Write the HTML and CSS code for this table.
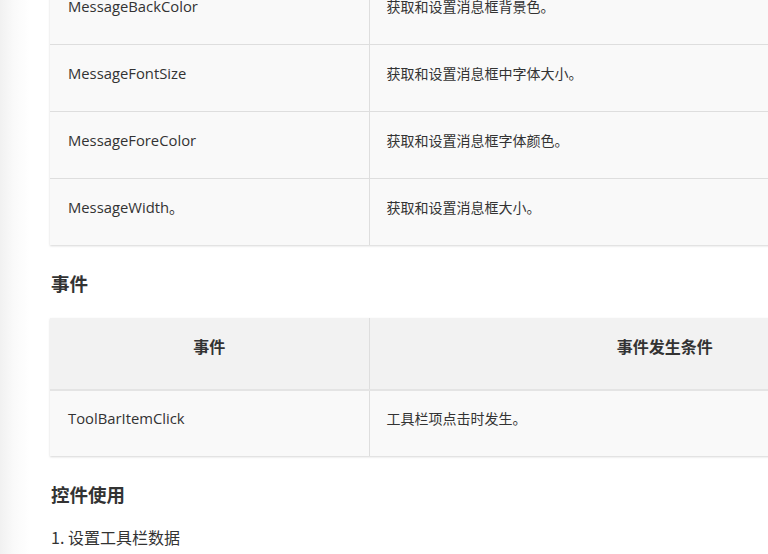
FILE: index.html
```html
<!DOCTYPE html>
<html lang="zh-CN">
<head>
<meta charset="utf-8">
<link rel="stylesheet" href="styles.css">
</head>
<body>
<div class="page">
  <div class="content">
    <table class="doc-table props">
      <colgroup><col class="c1"><col class="c2"></colgroup>
      <tbody>
        <tr><td>MessageBackColor</td><td>获取和设置消息框背景色。</td></tr>
        <tr><td>MessageFontSize</td><td>获取和设置消息框中字体大小。</td></tr>
        <tr><td>MessageForeColor</td><td>获取和设置消息框字体颜色。</td></tr>
        <tr><td>MessageWidth。</td><td>获取和设置消息框大小。</td></tr>
      </tbody>
    </table>
    <h3 class="sec">事件</h3>
    <table class="doc-table events">
      <colgroup><col class="c1"><col class="c2"></colgroup>
      <thead>
        <tr><th>事件</th><th>事件发生条件</th></tr>
      </thead>
      <tbody>
        <tr><td>ToolBarItemClick</td><td>工具栏项点击时发生。</td></tr>
      </tbody>
    </table>
    <h3 class="sec sec2">控件使用</h3>
    <p class="step">1. 设置工具栏数据</p>
  </div>
</div>
</body>
</html>
```
FILE: styles.css
```css
html, body {
  margin: 0;
  padding: 0;
  width: 768px;
  height: 554px;
  overflow: hidden;
  background: #fff;
}
.page {
  display: flow-root;
  height: 554px;
  background: linear-gradient(to right, #f1f1f1 0px, #fafafa 14px, #ffffff 30px);
  font-family: "Open Sans", "Noto Sans CJK SC", sans-serif;
  color: #333;
}
.content {
  padding-left: 50px;
}
.doc-table {
  width: 911px;
  border-collapse: collapse;
  background: #f9f9f9;
  box-shadow: 0 1px 2px rgba(0,0,0,0.16);
  font-size: 14px;
}
.doc-table .c1 { width: 319px; }
.doc-table td {
  height: 66px;
  box-sizing: border-box;
  padding: 16px 17px 26px 18px;
  line-height: 24px;
  vertical-align: top;
  border-top: 1px solid #dedede;
  border-right: 1px solid #dedede;
}
.doc-table td:first-child {
  font-size: 14.8px;
}
.doc-table td:last-child {
  font-family: "Noto Sans CJK SC", sans-serif;
  font-size: 14px;
  padding-left: 17px;
}
.props {
  margin-top: -23px;
}
.events thead th {
  background: #f2f2f2;
  height: 71px;
  box-sizing: border-box;
  padding: 16px 17px 31px;
  line-height: 24px;
  font-family: "Noto Sans CJK SC", sans-serif;
  font-weight: bold;
  font-size: 16px;
  color: #333;
  text-align: center;
  vertical-align: top;
  border-right: 1px solid #dedede;
  border-bottom: 2px solid #e4e4e4;
}
.events tbody td {
  border-top: none;
  padding-top: 15px;
}
.sec {
  margin: 0;
  padding: 25px 0 22px 1px;
  line-height: 26px;
  font-family: "Noto Sans CJK SC", sans-serif;
  font-size: 18.5px;
  font-weight: bold;
  color: #333;
}
.sec2 {
  padding-bottom: 8px;
}
.step {
  margin: 0;
  padding: 10px 0 0 1px;
  line-height: 24px;
  font-family: "Noto Sans CJK SC", sans-serif;
  font-size: 16px;
  color: #333;
}
```
